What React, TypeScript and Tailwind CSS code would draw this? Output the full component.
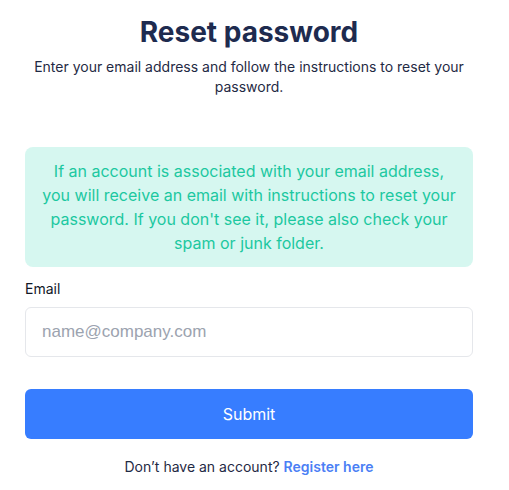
import React from "react";

export default function App() {
  return (
    <div className="w-[509px] h-[490px] bg-white pl-[25px] pt-[14px]" style={{ fontFamily: "Inter, 'Noto Sans', sans-serif" }}>
      <div className="w-[448px] flex flex-col items-stretch">
        <h1 className="text-center text-[28px] leading-[36px] font-bold text-[#1e2b4f]">Reset password</h1>
        <p className="mt-[7px] text-center text-[14px] leading-[20px] text-[#1f2a44]">
          Enter your email address and follow the instructions to reset your password.
        </p>
        <div className="mt-[50px] rounded-lg bg-[#d6f7f0] px-4 py-[12px] text-center text-[16px] leading-[24px] text-[#1cc8a0]">
          If an account is associated with your email address, you will receive an email with instructions to reset your password. If you don't see it, please also check your spam or junk folder.
        </div>
        <label className="mt-[12px] text-[14px] leading-[20px] text-[#111827]">Email</label>
        <input
          type="email"
          placeholder="name@company.com"
          className="mt-[8px] h-[50px] rounded-md border border-[#e5e7eb] px-4 text-[17px] text-[#111827] placeholder:text-[#9ca3af] outline-none"
          style={{ fontFamily: "'Liberation Sans', Arial, sans-serif" }}
        />
        <button className="mt-[32px] h-[50px] rounded-md bg-[#377dff] text-white text-[16px] font-normal">Submit</button>
        <p className="mt-[18px] text-center text-[14px] leading-[20px] text-[#1f2a44]">
          Don’t have an account? <a className="font-semibold text-[#4b7ff5]">Register here</a>
        </p>
      </div>
    </div>
  );
}
